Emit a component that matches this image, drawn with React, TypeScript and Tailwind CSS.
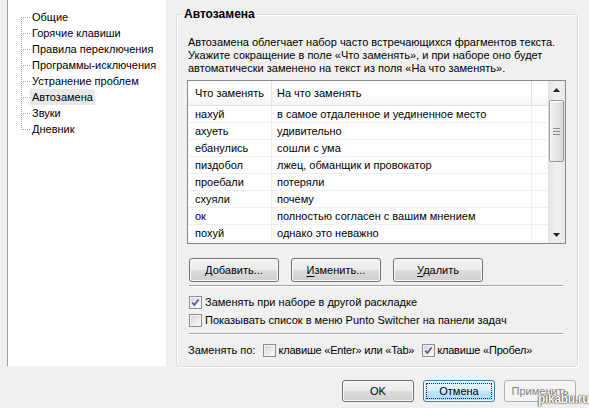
const treeItems = [
  "Общие",
  "Горячие клавиши",
  "Правила переключения",
  "Программы-исключения",
  "Устранение проблем",
  "Автозамена",
  "Звуки",
  "Дневник",
]

const rows = [
  ["нахуй", "в самое отдаленное и уединенное место"],
  ["ахуеть", "удивительно"],
  ["ебанулись", "сошли с ума"],
  ["пиздобол", "лжец, обманщик и провокатор"],
  ["проебали", "потеряли"],
  ["схуяли", "почему"],
  ["ок", "полностью согласен с вашим мнением"],
  ["похуй", "однако это неважно"],
]

function TreeLine({ first, last }: { first: boolean; last: boolean }) {
  return (
    <svg width="9" height="16" className="shrink-0">
      <line
        x1="0.5"
        y1={first ? 8 : 0}
        x2="0.5"
        y2={last ? 9 : 16}
        stroke="#a0a0a0"
        strokeDasharray="1 1"
      />
      <line x1="2" y1="8.5" x2="9" y2="8.5" stroke="#a0a0a0" strokeDasharray="1 1" />
    </svg>
  )
}

function Check({ on }: { on?: boolean }) {
  return (
    <span className="flex h-[13px] w-[13px] shrink-0 items-center justify-center border border-[#8e8f8f] bg-white">
      <span className="flex h-[11px] w-[11px] items-center justify-center border border-[#f3f3f3] bg-gradient-to-br from-[#d6d6d6] to-[#fbfbfb]">
        {on && (
          <svg width="9" height="9" viewBox="0 0 9 9">
            <path d="M1.3 4.6 L3.4 7 L7.6 1.4" fill="none" stroke="#4a5f97" strokeWidth="1.7" />
          </svg>
        )}
      </span>
    </span>
  )
}

function WinButton({ first, rest }: { first: string; rest: string }) {
  return (
    <button className="flex h-[24px] w-[90px] items-center justify-center rounded-[3px] border border-[#707070] bg-[linear-gradient(to_bottom,#f2f2f2_0%,#ebebeb_50%,#dddddd_50%,#cfcfcf_100%)] text-[11px] text-black shadow-[inset_0_0_0_1px_#fbfbfb]">
      <span>
        <span className="underline underline-offset-2">{first}</span>
        {rest}
      </span>
    </button>
  )
}

function Separator() {
  return <div className="ml-[2px] mr-[3px] h-[2px] border-t border-[#a0a0a0] border-b border-b-white" />
}

export default function App() {
  return (
    <div className="relative h-[408px] w-[589px] overflow-hidden bg-[#f0f0f0] font-['Liberation_Sans',Arial,sans-serif] text-[11px] leading-[13px] text-black">
      <div className="flex">
        {/* Tree */}
        <div className="ml-[7px] h-[366px] w-[159px] border-l border-[#a0a0a0] bg-white pt-[9px]">
          {treeItems.map((item, i) => (
            <div key={item} className="flex h-[16px] items-center pl-[13px]">
              <TreeLine first={i === 0} last={i === treeItems.length - 1} />
              <span
                className={`h-[16px] px-[2px] leading-[16px] ${
                  item === "Автозамена" ? "bg-[#e8e8e8]" : ""
                }`}
              >
                {item}
              </span>
            </div>
          ))}
        </div>

        {/* Group box */}
        <div className="relative ml-[10px] mt-[14px] h-[353px] w-[402px] rounded-[3px] border border-[#d5dfe5] pl-[10px] pr-[11px] pt-[21px] shadow-[inset_1px_1px_0_#fff,1px_1px_0_#fff]">
          <span className="absolute -top-[8px] left-[6px] bg-[#f0f0f0] px-[1px] text-[12px] font-bold leading-[14px]">
            Автозамена
          </span>

          <p className="ml-[1px]">
            Автозамена облегчает набор часто встречающихся фрагментов текста.
            <br />
            Укажите сокращение в поле «Что заменять», и при наборе оно будет
            <br />
            автоматически заменено на текст из поля «На что заменять».
          </p>

          {/* List view */}
          <div className="mt-[5px] flex h-[164px] w-[379px] border border-[#828790] bg-white">
            <div className="flex flex-1 flex-col overflow-hidden">
              <div className="flex h-[25px] shrink-0 border-b border-[#e5e5e5] bg-gradient-to-b from-white from-50% to-[#f3f4f6]">
                <div className="flex w-[84px] items-center border-r border-[#e3e5e8] pl-[7px]">Что заменять</div>
                <div className="flex w-[260px] items-center border-r border-[#e3e5e8] pl-[5px]">На что заменять</div>
                <div className="flex-1" />
              </div>
              {rows.map(([a, b]) => (
                <div key={a} className="flex h-[17px] shrink-0 border-b border-[#f0f0f0]">
                  <div className="flex w-[84px] items-center border-r border-[#f0f0f0] pl-[7px]">{a}</div>
                  <div className="flex w-[260px] items-center border-r border-[#f0f0f0] pl-[5px]">{b}</div>
                  <div className="flex-1" />
                </div>
              ))}
            </div>

            {/* Scrollbar */}
            <div className="flex w-[17px] flex-col bg-gradient-to-r from-[#e3e3e3] via-[#f0f0f0] to-[#eaeaea]">
              <div className="flex h-[17px] items-center justify-center">
                <svg width="7" height="4">
                  <path d="M3.5 0 L7 4 L0 4 Z" fill="#222" />
                </svg>
              </div>
              <div className="mx-[1px] mt-[2px] flex h-[62px] items-center justify-center rounded-[2px] border border-[#979797] bg-gradient-to-r from-[#f3f3f3] via-[#e8e8e8] to-[#d8d8d8] shadow-[inset_1px_1px_0_#fff]">
                <svg width="7" height="7">
                  <path d="M0 0.5 H7 M0 3.5 H7 M0 6.5 H7" stroke="#8a8a8a" />
                </svg>
              </div>
              <div className="flex-1" />
              <div className="flex h-[17px] items-center justify-center">
                <svg width="7" height="4">
                  <path d="M0 0 L7 0 L3.5 4 Z" fill="#222" />
                </svg>
              </div>
            </div>
          </div>

          <div className="ml-[2px] mt-[14px] flex gap-[12px]">
            <WinButton first="Д" rest="обавить..." />
            <WinButton first="И" rest="зменить..." />
            <WinButton first="У" rest="далить" />
          </div>

          <div className="mt-[3px]">
            <Separator />
          </div>

          <div className="mt-[6px] flex h-[18px] items-center gap-[3px] pl-[2px]">
            <Check on />
            <span>Заменять при наборе в другой раскладке</span>
          </div>
          <div className="flex h-[18px] items-center gap-[3px] pl-[2px]">
            <Check />
            <span>Показывать список в меню Punto Switcher на панели задач</span>
          </div>

          <div className="mt-[4px]">
            <Separator />
          </div>

          <div className="mt-[6px] flex h-[18px] items-center pl-[1px]">
            <span>Заменять по:</span>
            <span className="ml-[8px]">
              <Check />
            </span>
            <span className="ml-[2px] tracking-[-0.2px]">клавише «Enter» или «Tab»</span>
            <span className="ml-[8px]">
              <Check on />
            </span>
            <span className="ml-[2px] tracking-[-0.2px]">клавише «Пробел»</span>
          </div>
        </div>
      </div>

      {/* Dialog buttons */}
      <div className="mt-[13px] flex justify-end gap-[9px] pr-[13px]">
        <button className="h-[22px] w-[72px] rounded-[3px] border border-[#707070] bg-[linear-gradient(to_bottom,#f2f2f2_0%,#ebebeb_50%,#dddddd_50%,#cfcfcf_100%)] text-[11px] shadow-[inset_0_0_0_1px_#fbfbfb]">
          OK
        </button>
        <button className="flex h-[22px] w-[72px] items-center justify-center rounded-[3px] border border-[#3c7fb1] bg-[linear-gradient(to_bottom,#eaf6fd_0%,#d9f0fc_50%,#bee6fd_50%,#a7d9f5_100%)] p-[2px] text-[11px] shadow-[inset_0_0_0_1px_#fcfdfe]">
          <span className="flex h-full w-full items-center justify-center border border-dotted border-[#222]">
            Отмена
          </span>
        </button>
        <button className="h-[22px] w-[72px] rounded-[3px] border border-[#adb2b5] bg-[#f4f4f4] text-[11px] text-[#838383]">
          Применить
        </button>
      </div>

      <span className="absolute left-[538px] top-[392px] text-[12px] font-bold leading-[14px] tracking-[-0.3px] text-white [text-shadow:0_0_1px_#333,0_0_1px_#333,0_0_2px_#555]">
        pikabu.ru
      </span>
    </div>
  )
}
